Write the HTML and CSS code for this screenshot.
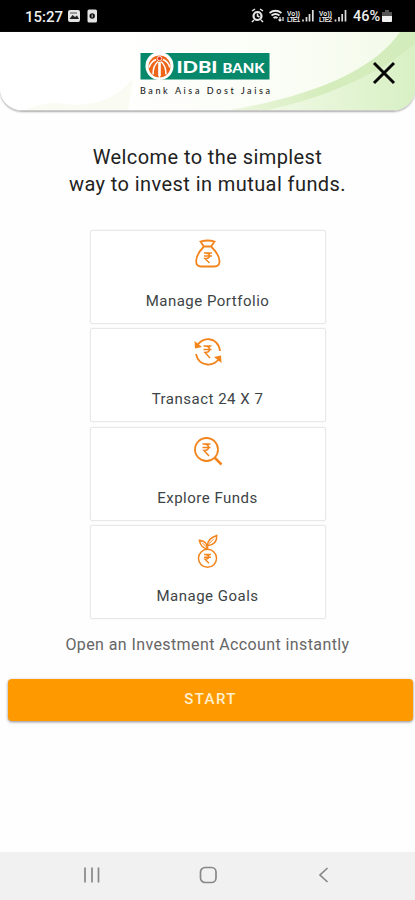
FILE: index.html
```html
<!DOCTYPE html>
<html lang="en">
<head>
<meta charset="utf-8">
<meta name="viewport" content="width=device-width, initial-scale=1">
<title>IDBI Bank Mutual Funds</title>
<link rel="stylesheet" href="styles.css">
</head>
<body>
<div class="status">
  <span class="clock">15:27</span>
  <svg class="notices" width="32" height="16" viewBox="0 0 32 16">
    <rect x="1" y="2" width="12" height="12" rx="2" fill="#e4e4e4"/>
    <path d="M2.5 11l3-4 2.5 2 2-1.500 2 3.500z" fill="#222"/><path d="M3 5h7" stroke="#555"/>
    <rect x="20.500" y="1.500" width="9.500" height="13" rx="1.500" fill="#e4e4e4"/>
    <circle cx="25.200" cy="8" r="2.700" fill="#111"/><path d="M25.200 6.500v3" stroke="#ddd"/>
  </svg>
  <svg class="signals" width="98" height="18" viewBox="0 0 98 18">
    <g fill="none" stroke="#e8e8e8">
      <circle cx="6.500" cy="9" r="4" stroke-width="2.200"/><path d="M6.500 6.500V9l2 1M1 4l3-2M12 4L9 2M3 13l-2 2M10 13l2 2" stroke-width="1.500"/>
      <path d="M18.500 6q6-4.500 12 0M20.500 8.500q4-3 8 0M22.500 11q2-1.500 4 0" stroke-width="1.800"/>
      <path d="M29 10v4m-1.500-1.500L29 14l1.500-1.500M32 14v-4" stroke-width="1.200"/>
    </g>
    <g fill="#e8e8e8" class="net"><text x="36" y="8.500" textLength="13">Vo))</text><text x="36" y="14.800" textLength="13">LTE1</text><text x="68" y="8.500" textLength="13">Vo))</text><text x="68" y="14.800" textLength="13">LTE2</text></g>
    <path d="M52 14.500v-2M55.500 14.500V10M58.500 14.500V7M61.800 14.500V3M84.500 14.500v-2M88 14.500V10M91.200 14.500V7M94.500 14.500V3" stroke="#ddd" stroke-width="1.700"/>
  </svg>
  <span class="percent">46%</span>
  <svg class="battery" width="10" height="14" viewBox="0 0 10 14"><path d="M3 1h4v2h3v4H0V3h3z" fill="#555"/><path d="M0 7h10v5q0 1-1 1H1q-1 0-1-1z" fill="#f1f1f1"/></svg>
</div>
<header class="header">
  <svg class="swoosh" viewBox="0 0 415 79" preserveAspectRatio="none">
    <defs>
      <linearGradient id="mist" x1="0" x2="1"><stop offset=".25" stop-color="#fff"/><stop offset=".7" stop-color="#fafdf5"/><stop offset="1" stop-color="#f2fae8"/></linearGradient>
      <linearGradient id="leaf" x1="0" x2="1"><stop offset="0" stop-color="#edf7df"/><stop offset=".5" stop-color="#d5edbd"/><stop offset="1" stop-color="#d3ecbc"/></linearGradient>
      <linearGradient id="glow" x1="0" x2="1"><stop offset="0" stop-color="#f0f9e5"/><stop offset="1" stop-color="#d8f0c4"/></linearGradient>
    </defs>
    <path d="M0 0h415v79H0z" fill="url(#mist)"/>
    <path d="M25 79q20-8 32-7 50 8 76-25l-5 32z" fill="#fafbf3"/>
    <path d="M230 79C316 64 374 38 400 0h15v79z" fill="url(#leaf)"/>
    <path d="M268 79C330 65 380 42 415 12v67z" fill="url(#glow)"/>
  </svg>
  <svg class="logo" width="134" height="46" viewBox="0 0 134 46">
    <rect x="1.500" y="1" width="129" height="26.500" fill="#07886b"/>
    <circle cx="20.500" cy="14" r="14" fill="#fff"/>
    <circle cx="20.500" cy="14.500" r="11" fill="#ec6518"/>
    <path d="M20.500 10v16M19 9.500q-5 4-5 13M22 9.500q5 4 5 13M17 7.500q-5 2-7 8M24 7.500q5 2 7 8" fill="none" stroke="#fff" stroke-width="1.500"/>
    <path d="M20.500 10v14" stroke="#fff" stroke-width="2.500"/>
    <circle cx="20.500" cy="6.500" r="2.200" fill="#e23820" stroke="#fff" stroke-width=".8"/>
    <text class="brand" x="37.500" y="21.200" font-size="17" textLength="41" lengthAdjust="spacingAndGlyphs">IDBI</text>
    <text class="brand" x="83.500" y="21.200" font-size="12.500" textLength="42" lengthAdjust="spacingAndGlyphs">BANK</text>
    <text class="motto" x="1" y="41.500" textLength="130">Bank Aisa Dost Jaisa</text>
  </svg>
  <svg class="close" width="24" height="24" viewBox="0 0 24 24"><path d="M2 2l20 20M22 2L2 22" stroke="#080808" stroke-width="3"/></svg>
</header>
<main class="main">
  <h1 class="title"><span class="line-one">Welcome to the simplest</span><br>way to invest in mutual funds.</h1>
  <div class="cards">
    <div class="card">
      <svg class="icon" viewBox="0 0 30 30"><path d="M10.500 7L7.500 2.500q7.500-2 14 0L18.500 7M10 7.500h9M10.500 8Q3.500 15 3.200 22q-.2 5.500 5 5.500h13q5.500 0 5.300-5.500Q26 15 18.500 8"/><path class="rupee" d="M11 14h8M11 17h8M12 14c6 0 6 5.500 0 5.500l4.500 4.500"/></svg>
      <span>Manage Portfolio</span>
    </div>
    <div class="card">
      <svg class="icon" viewBox="0 0 30 30"><path d="M3.500 10C8-1 25-1 27 14M27 20C22 30.500 6 30.500 3 17"/><path class="tip" d="M1.500 4l.5 7.500 7-1.500zM28.500 26l-.5-7.500-7 1.500z"/><path class="rupee" d="M10.500 9h8M10.500 12.500h8M12 9c6 0 6 6.500 0 6.500l5 5.500"/></svg>
      <span>Transact 24 X 7</span>
    </div>
    <div class="card">
      <svg class="icon" viewBox="0 0 30 30"><circle cx="13.500" cy="13.500" r="11.500"/><path d="M21.500 21.500l7 7" stroke-width="2.500"/><path class="rupee" d="M9.500 8h8M9.500 11.500h8M11 8c6 0 6 6.500 0 6.500l5 5.500"/></svg>
      <span>Explore Funds</span>
    </div>
    <div class="card">
      <svg class="icon sprout" viewBox="0 0 30 36"><circle cx="14.500" cy="25" r="9.300"/><path d="M14.500 15.500V11M14.500 12Q14 5 24 1.500 24.500 11 14.500 12zM14.500 15Q8 15 6 6.500 14 7 14.500 15z"/><path d="M15 11l6-6M13.500 13.500L9 9" stroke-width="1"/><path class="rupee" d="M11 21h7M11 24h7M12 21c5 0 5 5 0 5l4 4"/></svg>
      <span>Manage Goals</span>
    </div>
  </div>
  <p class="invite">Open an Investment Account instantly</p>
  <button class="start">START</button>
</main>
<nav class="nav">
  <svg width="20" height="20" viewBox="0 0 20 20"><path d="M3 2.500v15M10 2.500v15M16.500 2.500v15"/></svg>
  <svg width="20" height="20" viewBox="0 0 20 20"><rect x="2.500" y="2.500" width="15.500" height="15" rx="4.500"/></svg>
  <svg width="20" height="20" viewBox="0 0 20 20"><path d="M13.500 3L6 10l7.500 7"/></svg>
</nav>
</body>
</html>
```
FILE: styles.css
```css
* { box-sizing: border-box; }
body {
  margin: 0;
  height: 900px;
  display: flex;
  flex-direction: column;
  background: #fefefe;
  font-family: Roboto, "Liberation Sans", sans-serif;
  overflow: hidden;
}
.status {
  height: 32px;
  flex: none;
  display: flex;
  align-items: center;
  padding: 0 23px 0 25px;
  background: #000;
  color: #eee;
  font-weight: 500;
}
.clock { font-size: 15px; width: 42px; line-height: 18px; padding-top: 1px; }
.notices { flex: none; }
.signals { margin-left: auto; flex: none; }
.net { font: bold 6.500px "Liberation Sans", sans-serif; }
.percent { font-size: 14.500px; width: 28px; margin-left: 4px; white-space: nowrap; padding-top: 1px; }
.battery { margin-left: 1px; flex: none; }
.header {
  position: relative;
  height: 79px;
  flex: none;
  border-radius: 0 0 22px 22px;
  overflow: hidden;
  display: flex;
  justify-content: space-between;
  padding: 20px 19px 0 139px;
  border-bottom: 1px solid #ccc;
  box-shadow: 0 1px 2px #aaa;
}
.swoosh { position: absolute; inset: 0; width: 100%; height: 100%; }
.logo, .close { position: relative; flex: none; }
.close { margin-top: 9px; }
.brand { font-family: Lato, sans-serif; font-weight: 900; fill: #fff; }
.motto { font: 500 9px Lato, sans-serif; fill: #222; }
.main {
  flex: 1;
  display: flex;
  flex-direction: column;
  align-items: center;
}
.title {
  margin: 33px 0 0;
  font-size: 20px;
  line-height: 27px;
  font-weight: 400;
  text-align: center;
  color: #222;
  letter-spacing: .42px;
}
.cards {
  width: 236px;
  margin-top: 32px;
  display: grid;
  grid-auto-rows: 94px;
  gap: 4.300px;
}
.card {
  border: 1px solid #e8e8e8;
  border-radius: 2px;
  box-shadow: 0 0 2px #eee;
  background: #fff;
  display: flex;
  flex-direction: column;
  align-items: center;
  justify-content: space-between;
  padding: 8px 0 12px;
  font-size: 15px;
  line-height: 20px;
  letter-spacing: .5px;
  color: #3d4446;
}
.icon { width: 30px; height: 30px; fill: none; stroke: #f2841b; stroke-width: 1.800; }
.sprout { height: 35px; stroke-width: 1.500; }
.icon .rupee { stroke-width: 1.500; }
.icon .tip { fill: #f2841b; stroke: none; }
.invite {
  margin: 16px 0 0;
  font-size: 16px;
  line-height: 20px;
  letter-spacing: .4px;
  color: #666;
}
.start {
  align-self: stretch;
  height: 42px;
  margin: 24px 2px 0 8px;
  padding: 0 0 2px;
  border: 0;
  border-radius: 4px;
  background: #ff9900;
  color: #fff0d0;
  font: 500 15px Roboto, sans-serif;
  letter-spacing: 1.400px;
  box-shadow: 0 1px 3px #888;
}
.nav {
  height: 48px;
  flex: none;
  background: #f1f1f1;
  display: flex;
  justify-content: space-between;
  align-items: center;
  padding: 0 81px 3px 82px;
}
.nav svg { fill: none; stroke: #888; stroke-width: 1.700; }
```
